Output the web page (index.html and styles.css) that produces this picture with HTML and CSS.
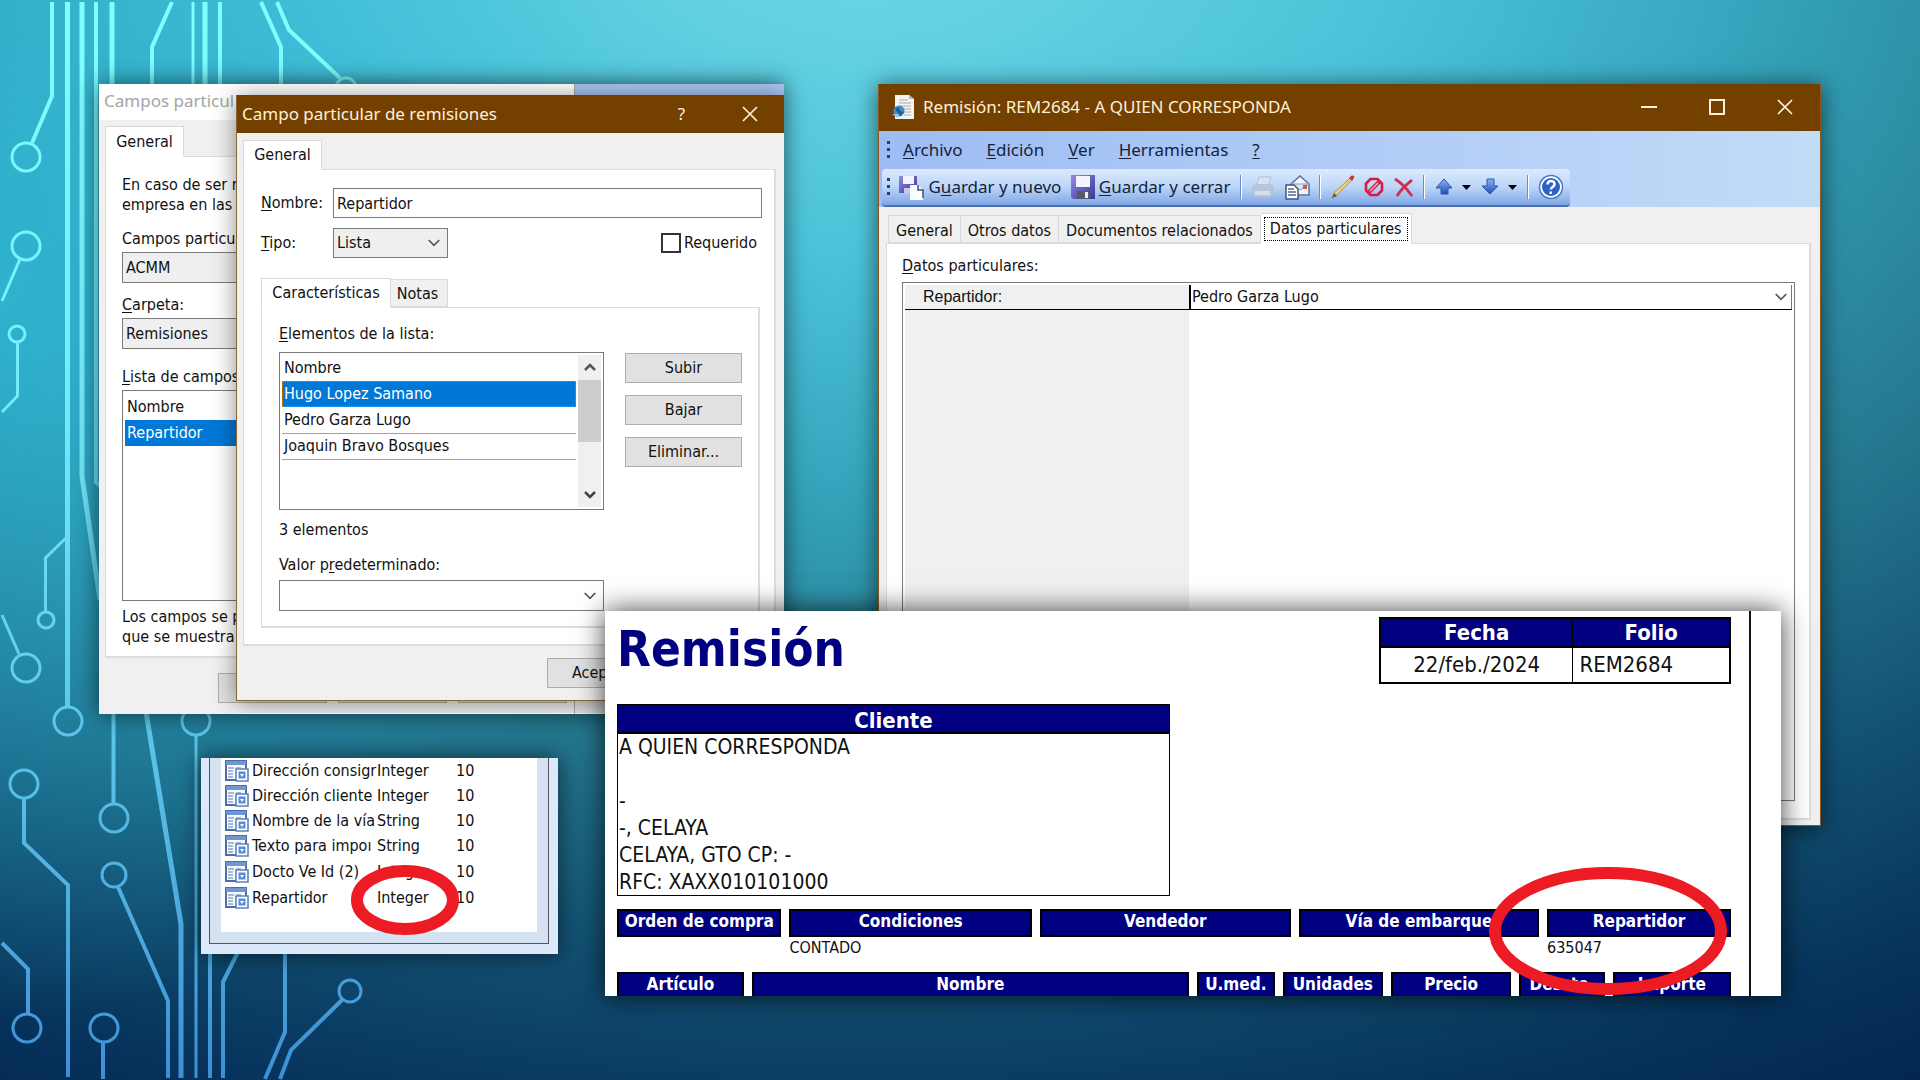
FILE: index.html
```html
<!DOCTYPE html>
<html lang="es">
<head>
<meta charset="utf-8">
<title>Remisión - Repartidor</title>
<link rel="stylesheet" href="styles.css">
</head>
<body>
<svg width="0" height="0" class="defs" aria-hidden="true">
  <defs>
    <linearGradient id="trace" gradientUnits="userSpaceOnUse" x1="0" y1="0" x2="0" y2="1080">
      <stop offset="0" stop-color="#80ffff"/><stop offset=".35" stop-color="#74edfa"/>
      <stop offset=".6" stop-color="#62d2ee"/><stop offset=".85" stop-color="#4fabdf"/><stop offset="1" stop-color="#3d8fd4"/>
    </linearGradient>
    <linearGradient id="blue" x1="0" y1="0" x2="0" y2="1"><stop offset="0" stop-color="#8fb4f2"/><stop offset="1" stop-color="#1f4fb8"/></linearGradient>
    <linearGradient id="disk" x1="0" y1="0" x2="1" y2="1"><stop offset="0" stop-color="#8f8ce0"/><stop offset="1" stop-color="#3a3796"/></linearGradient>
    <symbol id="field" viewBox="0 0 24 22">
      <path d="M1 1h20v19H1z" fill="#f6f9fd" stroke="#4a6ea9" stroke-width="2"/>
      <path d="M1 1h20v4H1z" fill="#6f97d4"/><path d="M3 8h6M3 11h5M3 14h5M3 17h5M11 8h5" stroke="#8fa3c2" stroke-width="1.5"/>
      <path d="M11 9h12v12H11z" fill="#fff" stroke="#5b83bf" stroke-width="1.6"/><path d="M13.500 11.500h7v7h-7z" fill="#5b8bd0"/>
      <path d="M15 14h4l-2 3z" fill="#fff"/>
    </symbol>
    <symbol id="chev" viewBox="0 0 12 8"><path d="M.7 1l5.300 5.300L11.300 1" fill="none" stroke="#555" stroke-width="1.700"/></symbol>
    <symbol id="close" viewBox="0 0 16 16"><path d="M1 1l14 14M15 1L1 15" stroke="#fff0dc" stroke-width="1.700"/></symbol>
  </defs>
</svg>
<main class="desktop">
  <svg class="circuit" viewBox="0 0 400 1080" preserveAspectRatio="xMinYMin meet" aria-hidden="true">
    <g fill="none" stroke="url(#trace)" stroke-width="4">
      <path d="M52 2V96L32 143M96 2V482l4 4M152 84V47L172 2M220 2V84M261 2l20 45v37M277 2l12 28 51 48"/>
      <path stroke-width="3" d="M193 2V84M20 259L2 301M17.500 342V396L2 412M66 538L45.500 558v54M2 615l17 39M196 735V1078"/>
      <path stroke-width="5" d="M67.500 2l.01 706M82 2V476l18 124M112 2V84M205 2V84M146 712l35 212V1078"/>
      <path d="M24 798v45l44 42V1077M113.500 712V804M118 887l50 114v77M210 950V1078M239 950l-16 32v96M285 950v82l-20 47M342 1000l-51 50-11 29M2 943l26 26v44M103 1042v37"/>
      <g stroke-width="3"><circle cx="26" cy="157" r="14"/><circle cx="26" cy="246" r="14"/><circle cx="17" cy="334" r="8"/><circle cx="346" cy="88" r="10"/><circle cx="46" cy="620" r="8"/><circle cx="26" cy="668" r="14"/><circle cx="68" cy="721" r="14"/><circle cx="24" cy="784" r="14"/><circle cx="114" cy="818" r="14"/><circle cx="114" cy="875" r="12"/><circle cx="196" cy="721" r="14"/><circle cx="350" cy="991" r="11"/><circle cx="27" cy="1028" r="14"/><circle cx="104" cy="1028" r="14"/></g>
    </g>
  </svg>

  <div class="owner"></div>

  <section class="win win-list">
    <h2 class="caption">Campos particul</h2>
    <div class="body">
      <div class="tabs"><button class="tab on">General</button></div>
      <div class="panel">
        <p class="note">En caso de ser r<br>empresa en las</p>
        <label for="empresa">Campos particul</label>
        <select id="empresa" class="combo"><option>ACMM</option></select>
        <label for="carpeta"><u>C</u>arpeta:</label>
        <select id="carpeta" class="combo"><option>Remisiones</option></select>
        <span class="lbl"><u>L</u>ista de campos</span>
        <div class="listbox"><table><thead><tr><th>Nombre</th></tr></thead><tbody><tr class="sel"><td>Repartidor</td></tr></tbody></table></div>
        <p class="note">Los campos se p<br>que se muestra</p>
      </div>
      <div class="buttons"><button></button><button></button><button></button></div>
    </div>
  </section>

  <section class="win win-field">
    <header class="titlebar"><h2>Campo particular de remisiones</h2>
      <button aria-label="Ayuda">?</button><button aria-label="Cerrar"><svg width="16" height="16"><use href="#close"/></svg></button></header>
    <div class="body">
      <div class="tabs"><button class="tab on">General</button></div>
      <div class="panel">
        <div class="row"><label for="nombre"><u>N</u>ombre:</label><input id="nombre" type="text" value="Repartidor"></div>
        <div class="row"><label for="tipo"><u>T</u>ipo:</label>
          <span class="pick tipo"><select id="tipo"><option>Lista</option></select><svg width="12" height="8"><use href="#chev"/></svg></span>
          <span class="check"><input id="req" type="checkbox"><label for="req">Requerido</label></span></div>
        <div class="tabs sub"><button class="tab on">Características</button><button class="tab">Notas</button></div>
        <div class="panel inner">
          <span class="lbl"><u>E</u>lementos de la lista:</span>
          <div class="split">
            <div class="listbox">
              <table><thead><tr><th>Nombre</th></tr></thead><tbody><tr class="sel focus"><td>Hugo Lopez Samano</td></tr><tr><td>Pedro Garza Lugo</td></tr><tr><td>Joaquin Bravo Bosques</td></tr></tbody></table>
              <div class="scroll"><svg width="12" height="8" viewBox="0 0 12 8"><path d="M1 7l5-5 5 5" fill="none" stroke="#555" stroke-width="2.500"/></svg><i></i><svg width="12" height="8" viewBox="0 0 12 8"><path d="M1 1l5 5 5-5" fill="none" stroke="#444" stroke-width="2.500"/></svg></div>
            </div>
            <div class="side"><button>Subir</button><button>Bajar</button><button>Eliminar...</button></div>
          </div>
          <span class="lbl count">3 elementos</span>
          <label for="valor">Valor p<u>r</u>edeterminado:</label>
          <span class="pick valor"><select id="valor"><option></option></select><svg width="12" height="8"><use href="#chev"/></svg></span>
        </div>
      </div>
      <div class="buttons"><button>Acep</button></div>
    </div>
  </section>

  <section class="win win-doc">
    <header class="titlebar">
      <svg class="docicon" width="24" height="26" viewBox="0 0 24 26"><path d="M4 1h14l5 4v20H4z" fill="#f4f4f2"/><path d="M18 1v4h5z" fill="#bbb"/><path d="M8 6h9M8 9h12M8 12h12M13 15h7M13 18h7M13 21h7" stroke="#aaa"/><circle cx="8" cy="17" r="5.500" fill="#3f8fd0"/><path d="M4 15l4-2 1 4 4 1-4 4z" fill="#1c5c9c"/><path d="M1 20l6 4 1-4z" fill="#9cc4e6"/></svg>
      <h2>Remisión: REM2684 - A QUIEN CORRESPONDA</h2>
      <button aria-label="Minimizar"><svg width="16" height="16"><path d="M0 8h16" stroke="#fff0dc" stroke-width="2"/></svg></button>
      <button aria-label="Maximizar"><svg width="16" height="16"><path d="M1 1h14v14H1z" fill="none" stroke="#fff0dc" stroke-width="2"/></svg></button>
      <button aria-label="Cerrar"><svg width="16" height="16"><use href="#close"/></svg></button>
    </header>
    <div class="bars">
      <nav class="menu"><i class="grip"></i><a href="#"><u>A</u>rchivo</a><a href="#"><u>E</u>dición</a><a href="#"><u>V</u>er</a><a href="#"><u>H</u>erramientas</a><a href="#"><u>?</u></a></nav>
      <div class="toolbar"><i class="grip"></i>
        <button class="savenew"><svg width="25" height="25" viewBox="0 0 25 25"><path d="M0 1h18v17H0z" fill="url(#disk)"/><path d="M4 1h11v8H4z" fill="#f3f4ff"/><path d="M5 13h7v5H5z" fill="#c9c9ee"/><path d="M11 10h8l5 5v10H11z" fill="#fbfdff"/><path d="M19 10v5h5v8" fill="none" stroke="#40506a" stroke-width="1.500"/></svg><span>G<u>u</u>ardar y nuevo</span></button>
        <button class="saveclose"><svg width="24" height="24" viewBox="0 0 24 24"><path d="M0 0h24v24H2l-2-2z" fill="url(#disk)"/><path d="M5 1h14v11H5z" fill="#f3f4ff"/><path d="M6 16h12v8H6z" fill="#555a6c"/><path d="M14 17h3v6h-3z" fill="#eee"/></svg><span><u>G</u>uardar y cerrar</span></button>
        <i class="sep"></i>
        <button class="ic" aria-label="Imprimir"><svg width="24" height="24" viewBox="0 0 24 24"><path d="M8 2h12l-3 9H5z" fill="#d6e2f2" stroke="#aebfd6"/><path d="M1 11l4-2h16l2 3v7l-4 3H3l-2-2z" fill="#b5c5db"/><path d="M4 16h15v4H4z" fill="#d5dfec"/></svg></button>
        <button class="ic" aria-label="Enviar"><svg width="25" height="25" viewBox="0 0 25 25"><path d="M6 9l9-8 9 8v11H10z" fill="#f2f6fc" stroke="#57719c" stroke-width="1.500"/><path d="M6 9h18l-9 6z" fill="#dce7f5" stroke="#8299bd"/><path d="M18 10h4v4h-4z" fill="#e2523d"/><path d="M1 10h8l4 4v10H1z" fill="#fff" stroke="#40587e" stroke-width="1.500"/><path d="M3 14h6M3 17h8M3 20h8" stroke="#506a92" stroke-width="1.500"/></svg></button>
        <i class="sep"></i>
        <button class="ic" aria-label="Editar"><svg width="24" height="24" viewBox="0 0 24 24"><path d="M1 23l3-6L19 3l2 2L6 20z" fill="#eccd72" stroke="#9c8a4c" stroke-width=".8"/><path d="M18 3l2-2c2-1 4 0 3 2l-2 3z" fill="#c9353b"/><path d="M1 23l2-5 3 3z" fill="#66583c"/></svg></button>
        <button class="ic wide" aria-label="Cancelar"><svg width="20" height="20" viewBox="0 0 20 20"><path d="M6.500 2h7L18 6.500v7L13.500 18h-7L2 13.500v-7z" fill="none" stroke="#d21e45" stroke-width="2.600"/><path d="M5 15L15 5" stroke="#d21e45" stroke-width="4"/><path d="M6 14l8-8" stroke="#f2c0d0" stroke-width="1.200"/></svg></button>
        <button class="ic wide" aria-label="Eliminar"><svg width="20" height="20" viewBox="0 0 20 20"><path d="M1 2c7 4 12 10 17 17M18 3C12 8 7 12 3 19" fill="none" stroke="#d0304c" stroke-width="2.800"/></svg></button>
        <i class="sep"></i>
        <button class="ic" aria-label="Anterior"><svg width="18" height="18" viewBox="0 0 18 18"><path d="M9 1l8 9h-4v6H6v-6H1z" fill="url(#blue)" stroke="#2b56b0"/></svg></button>
        <button class="car" aria-label="Más"><svg width="9" height="5"><path d="M0 0h9L4.500 5z"/></svg></button>
        <button class="ic" aria-label="Siguiente"><svg width="18" height="18" viewBox="0 0 18 18"><path d="M9 16l8-8h-4V1H6v7H1z" fill="url(#blue)" stroke="#2b56b0"/></svg></button>
        <button class="car" aria-label="Más"><svg width="9" height="5"><path d="M0 0h9L4.500 5z"/></svg></button>
        <i class="sep"></i>
        <button class="ic" aria-label="Ayuda"><svg width="26" height="26" viewBox="0 0 26 26"><circle cx="13" cy="13" r="11.500" fill="#fff" stroke="#4a78c8" stroke-width="1.500"/><circle cx="13" cy="13" r="9" fill="#2763c9"/><path d="M9.500 10.500c.3-5 7.500-4.500 7 0-.3 2.500-3.500 2.500-3.700 5M12.700 17.500v2.500" fill="none" stroke="#fff" stroke-width="2.500"/></svg></button>
      </div>
    </div>
    <div class="body">
      <div class="tabs"><button class="tab">General</button><button class="tab">Otros datos</button><button class="tab">Documentos relacionados</button><button class="tab on"><span>Datos particulares</span></button></div>
      <div class="panel">
        <span class="lbl"><u>D</u>atos particulares:</span>
        <div class="props">
          <div class="prop"><label for="rep">Repartidor:</label><span class="pick"><select id="rep"><option>Pedro Garza Lugo</option></select><svg width="12" height="8"><use href="#chev"/></svg></span></div>
          <div class="void"></div>
        </div>
      </div>
    </div>
  </section>

  <section class="report">
    <div class="page">
      <header><h1>Remisión</h1>
        <table class="date"><thead><tr><th>Fecha</th><th>Folio</th></tr></thead><tbody><tr><td>22/feb./2024</td><td>REM2684</td></tr></tbody></table>
      </header>
      <div class="client"><h3>Cliente</h3><p>A QUIEN CORRESPONDA<br><br>-<br>-, CELAYA<br>CELAYA, GTO CP: -<br>RFC: XAXX010101000</p></div>
      <table class="band orders">
        <thead><tr><th>Orden de compra</th><th>Condiciones</th><th>Vendedor</th><th>Vía de embarque</th><th>Repartidor</th></tr></thead>
        <tbody><tr><td></td><td>CONTADO</td><td></td><td></td><td>635047</td></tr></tbody>
      </table>
      <table class="band items">
        <thead><tr><th>Artículo</th><th>Nombre</th><th>U.med.</th><th>Unidades</th><th>Precio</th><th>Descto.</th><th>Importe</th></tr></thead>
      </table>
    </div>
    <svg class="mark big" width="238" height="128" viewBox="0 0 238 128"><ellipse cx="119" cy="64" rx="113" ry="58" fill="none" stroke="#ed1c24" stroke-width="12"/></svg>
  </section>

  <section class="fields">
    <div class="frame"><table>
      <tbody>
      <tr><td><svg width="24" height="22"><use href="#field"/></svg></td><td>Dirección consigr</td><td>Integer</td><td>10</td></tr>
      <tr><td><svg width="24" height="22"><use href="#field"/></svg></td><td>Dirección cliente</td><td>Integer</td><td>10</td></tr>
      <tr><td><svg width="24" height="22"><use href="#field"/></svg></td><td>Nombre de la vía</td><td>String</td><td>10</td></tr>
      <tr><td><svg width="24" height="22"><use href="#field"/></svg></td><td>Texto para impoı</td><td>String</td><td>10</td></tr>
      <tr><td><svg width="24" height="22"><use href="#field"/></svg></td><td>Docto Ve Id (2)</td><td>Integer</td><td>10</td></tr>
      <tr><td><svg width="24" height="22"><use href="#field"/></svg></td><td>Repartidor</td><td>Integer</td><td>10</td></tr>
      </tbody></table></div>
    <svg class="mark small" width="108" height="70" viewBox="0 0 108 70"><ellipse cx="54" cy="35" rx="48" ry="29" fill="none" stroke="#ed1c24" stroke-width="12"/></svg>
  </section>
</main>
</body>
</html>
```
FILE: styles.css
```css
* { box-sizing: border-box; margin: 0; padding: 0; }
:root { --tahoma: "DejaVu Sans Condensed", "DejaVu Sans", sans-serif; --segoe: "Noto Sans", "Open Sans", sans-serif; --brown: #734000; --navy: #000080; }
body { font: 16px/20px var(--tahoma); color: #111; }
button, input, select { font: inherit; color: inherit; border: 0; background: none; appearance: none; border-radius: 0; }
h1, h2, h3, th { font-weight: inherit; }
table { border-collapse: collapse; }
.defs { position: absolute; }
u { text-decoration-thickness: 1px; text-underline-offset: 2px; }

.desktop {
  position: relative; min-height: 100vh; overflow: hidden;
  background:
    radial-gradient(ellipse 36% 66% at 0% 28%, rgba(46, 186, 216, .8), rgba(46, 186, 216, 0)),
    radial-gradient(ellipse 110% 125% at 45% -8%, #6fd9e8 0%, #4cc3d9 25%, #35a6bd 42%, #25788f 62%, #125072 78%, #06315a 92%, #001c45 108%);
}
.circuit { position: absolute; left: 0; top: 0; height: 100%; aspect-ratio: 400 / 1080; }

.owner { position: absolute; left: 99px; top: 84px; width: 685px; height: 630px; background: linear-gradient(#a9c4f0 50%, #ececec 50%); box-shadow: 0 0 22px rgba(0, 0, 0, .6); }
.win { position: absolute; background: #f0f0f0; }
.titlebar { display: flex; align-items: center; background: var(--brown); color: #fff0dc; font: 17px/24px var(--segoe); }
.titlebar h2 { flex: 1; font-size: 17px; white-space: nowrap; }
.titlebar button { display: grid; place-items: center; }
.tabs { display: flex; align-items: flex-end; position: relative; }
.tab { border: 1px solid #d9d9d9; height: 28px; background: #f0f0f0; white-space: nowrap; }
.tab + .tab { border-left: 0; }
.tab.on { background: #fff; height: 31px; border-bottom-color: #fff; margin-bottom: -1px; z-index: 1; }
.panel { border: 1px solid #dcdcdc; border-right-width: 2px; border-bottom-width: 2px; background: #fff; display: flex; flex-direction: column; }
.listbox { border: 1px solid #7a7a7a; background: #fff; padding: 2px; display: flex; }
.listbox table { flex: 1; align-self: flex-start; }
.listbox th { text-align: left; height: 26px; padding-left: 2px; }
.listbox td { height: 26px; padding-left: 2px; border-bottom: 1px solid #a0a0a0; }
.listbox .sel td { background: #0078d7; color: #fff; border-bottom: 0; }
.listbox .focus td { outline: 1px dotted #d08020; outline-offset: -1px; }
.pick { display: grid; align-items: center; }
.pick select { grid-area: 1 / 1; width: 100%; height: 100%; padding-left: 3px; }
.pick svg { grid-area: 1 / 1; justify-self: end; margin-right: 7px; pointer-events: none; }

.win-list { left: 99px; top: 84px; width: 476px; border-right: 1px solid #aaa; }
.caption { font: 17px/34px var(--segoe); color: #a5a5a5; background: #fff; height: 36px; padding-left: 5px; }
.win-list .body { padding: 6px 6px 11px; }
.win-list .tab { width: 79px; }
.win-list .panel { height: 502px; padding: 18px 16px 0; white-space: nowrap; }
.win-list .panel > label { margin-top: 14px; }
.combo { border: 1px solid #7a7a7a; background: #efefef; height: 31px; padding-left: 3px; margin-top: 3px; flex: none; }
.win-list .panel > .combo + label { margin-top: 12px; }
.win-list .lbl { margin-top: 18px; }
.win-list .listbox { height: 211px; margin: 3px 0 6px; padding-top: 3px; flex: none; }
.buttons { display: flex; }
.buttons button, .side button { height: 30px; border: 1px solid #adadad; background: #e1e1e1; }
.win-list .buttons { padding: 15px 0 0 113px; gap: 11px; }
.win-list .buttons button { width: 109px; }

.win-field { left: 236px; top: 95px; width: 548px; border: solid #8a6534; border-width: 0 0 1px 1px; box-shadow: 0 2px 22px rgba(0, 0, 0, .45); clip-path: inset(-40px 0 -12px -40px); }
.win-field .titlebar { height: 38px; padding-left: 5px; }
.win-field .titlebar button { width: 67px; }
.win-field .titlebar button:last-child { width: 69px; }
.win-field .body { padding: 7px 8px 12px 6px; }
.win-field .tab.on { width: 79px; height: 30px; }
.win-field .panel { padding: 18px 12px 16px 17px; }
.row { display: flex; align-items: center; height: 30px; margin-bottom: 10px; }
.row > label { width: 72px; }
.row input[type=text] { flex: 1; height: 30px; border: 1px solid #7a7a7a; padding-left: 3px; }
.tipo { width: 115px; height: 30px; border: 1px solid #7a7a7a; background: #efefef; }
.check { margin-left: auto; display: flex; align-items: center; gap: 3px; padding-right: 5px; }
.check input { width: 20px; height: 20px; border: 2px solid #333; }
.win-field .sub { margin-top: 10px; }
.win-field .sub .tab.on { width: 130px; }
.win-field .sub .tab { width: 57px; padding: 2px 3px 0 0; }
.win-field .sub .tab.on { padding: 0; }
.win-field .inner { padding: 16px 16px 15px 17px; margin-right: 2px; }
.split { display: flex; gap: 21px; margin-top: 8px; }
.split .listbox { flex: 1; height: 158px; }
.split .side { width: 117px; display: flex; flex-direction: column; gap: 12px; padding-top: 1px; }
.scroll { width: 23px; margin-left: 2px; background: #f0f0f0; display: flex; flex-direction: column; align-items: center; padding: 8px 0; gap: 9px; }
.scroll i { width: 100%; height: 62px; background: #cdcdcd; }
.scroll svg:last-child { margin-top: auto; }
.count { margin: 10px 0 15px; }
.valor { width: 325px; height: 31px; border: 1px solid #7a7a7a; margin-top: 5px; }
.win-field .buttons { padding: 12px 0 0 304px; }
.win-field .buttons button { width: 108px; text-align: left; padding-left: 24px; }

.win-doc { left: 878px; right: 99px; top: 84px; border: 1px solid #8a5a1c; border-top: 0; box-shadow: 0 2px 22px rgba(0, 0, 0, .6); }
.win-doc .titlebar { height: 47px; padding: 0 5px 1px 12px; gap: 8px; }
.win-doc .titlebar button { width: 60px; }
.bars { background: linear-gradient(90deg, #9ebcf4, #c2dbf8); font: 17px/24px var(--segoe); color: #14233a; }
.menu { display: flex; align-items: center; height: 38px; padding-left: 8px; gap: 24px; }
.menu a { color: inherit; text-decoration: none; }
.grip { width: 3px; height: 19px; background: repeating-linear-gradient(#263f78 0 3px, transparent 3px 7px); }
.menu .grip { margin-right: -11px; }
.toolbar { margin-left: 3px; width: 688px; height: 38px; display: flex; align-items: center; padding: 0 6px 0 5px; border-radius: 4px; border-bottom: 2px solid #4a70b4; background: linear-gradient(#dceafd, #bcd5f8 50%, #7fa6e4); white-space: nowrap; justify-content: space-between; }
.toolbar button { display: flex; align-items: center; gap: 4px; }
.sep { width: 2px; height: 24px; background: #6a8ecb; border-right: 1px solid #fff; }
.win-doc .body { padding: 6px 9px 5px 7px; }
.win-doc .tabs { padding-left: 2px; }
.win-doc .tab { padding: 4px 7px 0; }
.win-doc .tab.on { padding: 0 3px; }
.tab.on span { display: block; border: 1px dotted #000; padding: 1px 5px; }
.win-doc .panel { padding: 12px 14px 17px 15px; height: 577px; }
.props { flex: 1; margin-top: 6px; border: 1px solid #7a7a7a; padding: 2px; display: flex; flex-direction: column; }
.prop { display: grid; grid-template-columns: 284px 1fr; height: 25px; border-bottom: 1px solid #000; }
.prop label { background: #f0f0f0; padding-left: 18px; font: 16px/24px "Liberation Sans", sans-serif; }
.prop .pick { border-left: 2px solid #000; border-right: 1px solid #777; }
.prop .pick select { padding-left: 1px; }
.prop .pick svg { margin-right: 4px; }
.void { flex: 1; width: 284px; background: #f0f0f0; }

.report { position: absolute; left: 605px; right: 139px; top: 611px; background: #fff; box-shadow: 0 0 26px rgba(0, 0, 0, .75); }
.page { margin-right: 30px; border-right: 2px solid #111; padding: 6px 18px 0 12px; }
.page header { display: flex; justify-content: space-between; align-items: flex-start; height: 87px; }
.page h1 { font: bold 49px/66px var(--tahoma); color: var(--navy); }
.date { width: 352px; font-size: 22px; border: 2px solid #000; }
.date th { background: var(--navy); color: #fff; font-weight: bold; height: 29px; border: 1px solid #000; border-bottom-width: 2px; line-height: 24px; }
.date td { border: 1px solid #000; height: 36px; text-align: center; width: 194px; }
.date td + td { text-align: left; padding-left: 6px; width: 158px; }
.client { border: 1px solid #000; width: 553px; max-width: 100%; height: 192px; }
.client h3 { background: var(--navy); color: #fff; font: bold 22px/32px var(--tahoma); text-align: center; border-bottom: 2px solid #000; height: 29px; }
.client p { font-size: 21px; line-height: 27px; padding-left: 1px; }
.band { table-layout: fixed; width: calc(100% + 16px); margin: 13px -8px 0; border-collapse: separate; border-spacing: 8px 0; white-space: nowrap; }
.band th { background: var(--navy); color: #fff; font-weight: bold; font-size: 17px; height: 28px; border: 2px solid #000; line-height: 20px; vertical-align: top; }
.band td { height: 22px; }
.orders th:nth-child(1) { width: 15.2%; }
.orders th:nth-child(2) { width: 22.4%; }
.orders th:nth-child(3) { width: 23.2%; }
.orders th:nth-child(4) { width: 22.2%; }
.items th { height: 24px; border-bottom: 0; }
.items th:nth-child(1) { width: 11.9%; }
.items th:nth-child(2) { width: 41%; }
.items th:nth-child(3) { width: 7.3%; }
.items th:nth-child(4) { width: 9.4%; }
.items th:nth-child(5) { width: 11.3%; }
.items th:nth-child(6) { width: 8%; }
.mark { position: absolute; }
.big { right: 54px; bottom: 1px; }

.fields { position: absolute; left: 201px; top: 758px; width: 357px; background: #dce9fb; padding: 0 9px 10px 8px; box-shadow: 0 0 22px rgba(0, 0, 0, .6); }
.frame { border: 1px solid #555; border-top: 0; background: #d5e2f1; padding: 0 11px 11px; }
.frame table { background: #fff; width: 100%; height: 174px; border-bottom: 21px solid #fff; table-layout: fixed; }
.frame td { white-space: nowrap; vertical-align: middle; }
.frame td:nth-child(1) { width: 31px; padding-left: 4px; }
.frame td:nth-child(2) { width: 120px; }
.frame td:nth-child(3) { width: 84px; padding-left: 5px; }
.frame svg { display: block; }
.small { left: 150px; top: 107px; }
```
